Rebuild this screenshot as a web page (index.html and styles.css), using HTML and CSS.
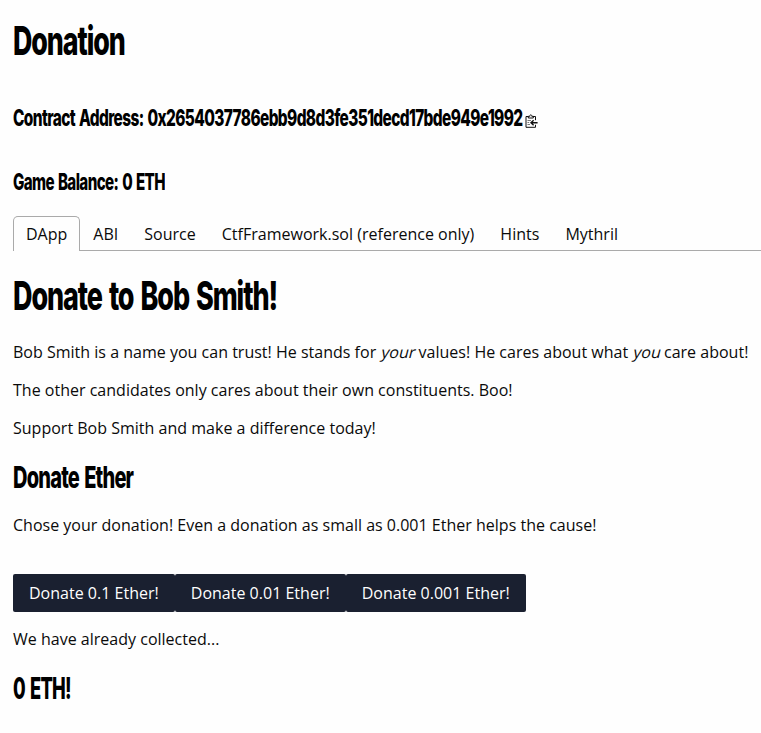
FILE: index.html
```
<!DOCTYPE html>
<html lang="en">
<head>
<meta charset="utf-8">
<title>Donation</title>
<link rel="stylesheet" href="styles.css">
</head>
<body>
<main>
<h1 class="title"><span class="condensed">Donation</span></h1>
<h4 class="address"><span class="condensed">Contract Address: 0x2654037786ebb9d8d3fe351decd17bde949e1992</span>
<svg class="copy" width="13" height="14" viewBox="0 0 13 14" fill="none" stroke="#111"><path d="M3.5 2.5H1v10.8h9.5v-2.5M8 2.5h2.5v3.7"/><path d="M3.3 4V2.3h1.5C4.8.3 6.8.3 6.8 2.3h1.5V4z"/><path d="M2.5 6.5H6M2.5 8.5h1.7M2.5 10.5H5" stroke="#777"/><path d="M12.6 8.7H6.5M8.6 6.2 6 8.7l2.6 2.5" stroke-width="1.4"/></svg></h4>
<h4 class="balance"><span class="condensed">Game Balance: 0 ETH</span></h4>
<nav class="tabs"><a class="tab active">DApp</a><a class="tab">ABI</a><a class="tab">Source</a><a class="tab">CtfFramework.sol (reference only)</a><a class="tab">Hints</a><a class="tab">Mythril</a></nav>
<h1 class="headline"><span class="condensed">Donate to Bob Smith!</span></h1>
<p>Bob Smith is a name you can trust! He stands for <em>your</em> values! He cares about what <em>you</em> care about!</p>
<p>The other candidates only cares about their own constituents. Boo!</p>
<p>Support Bob Smith and make a difference today!</p>
<h2 class="ether"><span class="condensed">Donate Ether</span></h2>
<p>Chose your donation! Even a donation as small as 0.001 Ether helps the cause!</p>
<div class="buttons"><button>Donate 0.1 Ether!</button><button>Donate 0.01 Ether!</button><button>Donate 0.001 Ether!</button></div>
<p>We have already collected...</p>
<h2 class="total"><span class="condensed">0 ETH!</span></h2>
</main>
</body>
</html>
```
FILE: styles.css
```
body { margin: 0; background: #fefefe; color: #0a0a0a; font: 16px/24px "Open Sans", "Noto Sans", sans-serif; letter-spacing: .01px; overflow: hidden; }
main { padding: 15px 0 0 13px; }
h1, h2, h4 { margin: 0; color: #000; font-family: Inter, Roboto, sans-serif; font-weight: 800; letter-spacing: -.04em; word-spacing: .08em; white-space: nowrap; }
h1 { font-size: 40px; line-height: 52px; }
h2 { font-size: 30px; line-height: 40px; }
h4 { font-size: 23px; line-height: 30px; }
.condensed { display: inline-block; transform: scaleX(var(--squeeze)); transform-origin: left; }
.title { --squeeze: .67; }
.address { --squeeze: .67; display: flex; align-items: center; margin-top: 36px; }
.address .condensed { width: 512px; }
.copy { margin-top: 6px; }
.balance { --squeeze: .658; margin-top: 34px; }
.tabs { display: flex; height: 35px; margin-top: 19px; box-sizing: border-box; border-bottom: 1px solid #aaa; }
.tab { box-sizing: border-box; height: 34px; padding: 5px 12px 0; border: 1px solid transparent; border-bottom: 0; }
.tab.active { height: 35px; background: #fefefe; border-color: #aaa; border-radius: 5px 5px 0 0; }
.headline { --squeeze: .674; margin: 19px 0 18px; }
p { margin: 0 0 14px; white-space: nowrap; }
em { display: inline-block; font-style: normal; transform: skewX(-14deg); transform-origin: 50% 80%; }
.ether { --squeeze: .667; margin: 17px 0 16px; }
.buttons { display: flex; margin: 37px 0 15px; }
button { height: 38px; padding: 0 16px; border: 0; border-radius: 2px; background: #1a2030; color: #fefefe; font: inherit; letter-spacing: .01px; }
.total { --squeeze: .61; margin-top: 17px; word-spacing: .1em; }
```
